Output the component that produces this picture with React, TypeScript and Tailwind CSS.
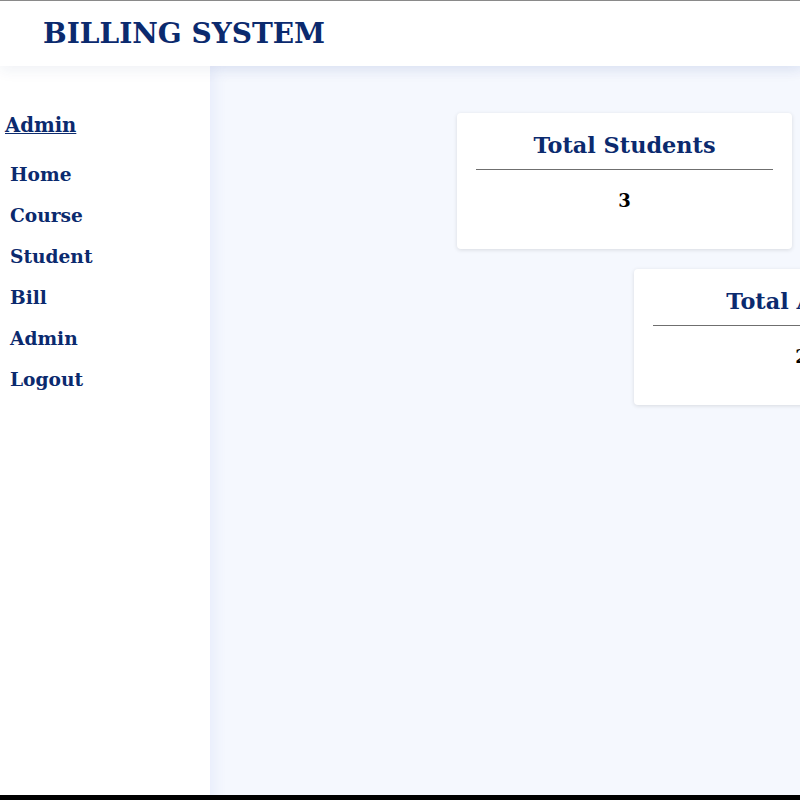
const navItems = ['Home', 'Course', 'Student', 'Bill', 'Admin', 'Logout'];

function StatCard({
  title,
  value,
  className,
  titleClass = '',
}: {
  title: string;
  value: string;
  className: string;
  titleClass?: string;
}) {
  return (
    <div
      className={`w-[335px] shrink-0 rounded-[4px] bg-white px-[19px] pt-[16px] pb-[35px] text-center shadow-[0_1px_4px_rgba(0,0,0,0.12)] ${className}`}
    >
      <h2 className={`text-[22.4px] font-bold leading-[32px] text-[#0b2a6e] ${titleClass}`}>{title}</h2>
      <hr className="mt-[8px] border-t border-[#6f6f6f]" />
      <p className="mt-[18px] text-[18px] font-bold leading-[26px] text-black">{value}</p>
    </div>
  );
}

export default function App() {
  return (
    <div className="h-[800px] bg-black font-['DejaVu_Serif',serif]">
      <div className="flex h-[795px] flex-col overflow-hidden bg-white">
        {/* Header */}
        <header className="relative z-10 flex h-[66px] shrink-0 items-center border-t border-[#8a8a8a] bg-white pl-[43px] shadow-[0_4px_14px_rgba(30,50,120,0.07)]">
          <h1 className="text-[28px] font-bold leading-none text-[#0b2a6e]">BILLING SYSTEM</h1>
        </header>

        <div className="flex min-h-0 flex-1">
          {/* Sidebar */}
          <aside className="w-[210px] shrink-0 bg-white">
            <a href="#" className="ml-[5px] mt-[47px] block text-[19.6px] font-bold leading-[26px] text-[#0b2a6e] underline">
              Admin
            </a>
            <nav className="mt-[23px] flex flex-col gap-[15px] pl-[10px]">
              {navItems.map((item) => (
                <a key={item} href="#" className="text-[18.6px] font-bold leading-[26px] text-[#0b2a6e]">
                  {item}
                </a>
              ))}
            </nav>
          </aside>

          {/* Main */}
          <main className="flex min-w-0 flex-1 flex-col gap-[20px] overflow-hidden bg-[#f5f8fe] pt-[47px] shadow-[inset_10px_8px_14px_-6px_rgba(60,90,200,0.08)]">
            <StatCard title="Total Students" value="3" className="ml-[247px]" />
            <StatCard title="Total Admins" value="2" className="ml-[424px]" titleClass="pl-[14px]" />
          </main>
        </div>
      </div>
    </div>
  );
}
